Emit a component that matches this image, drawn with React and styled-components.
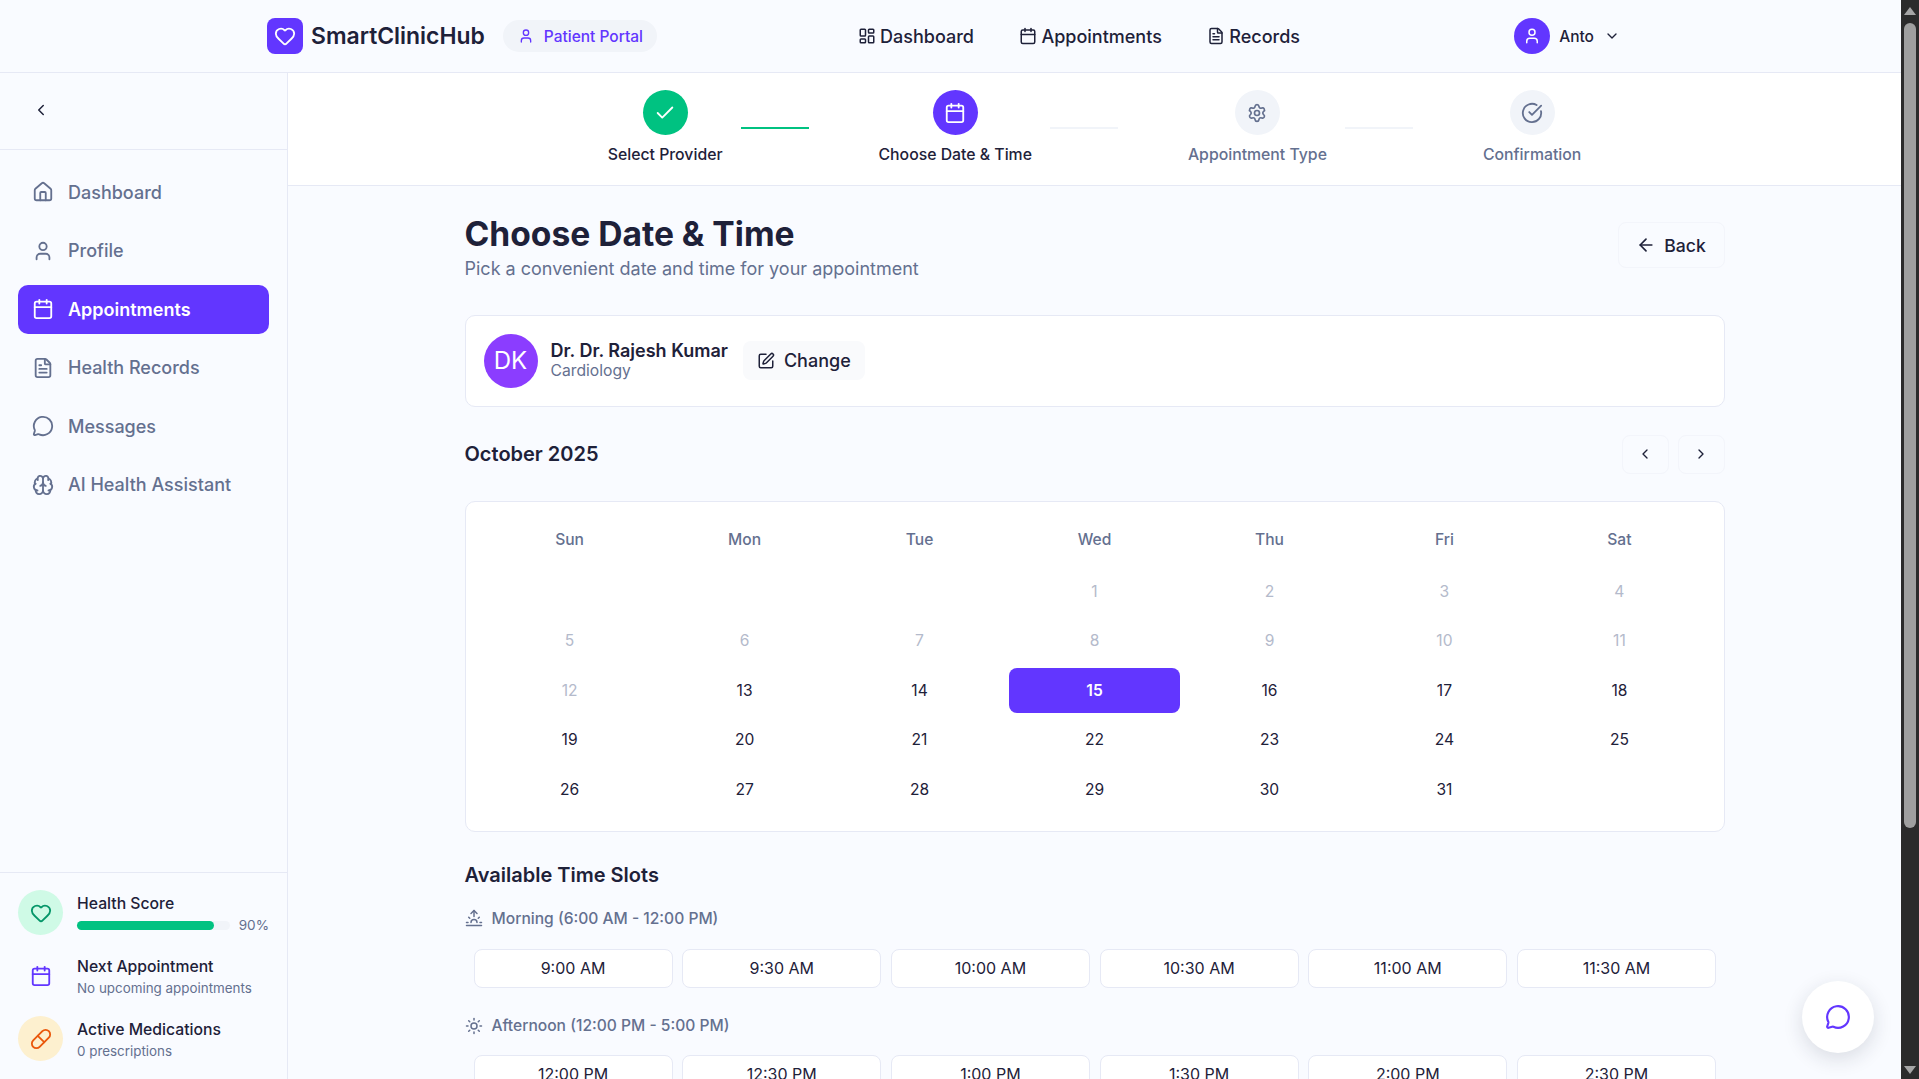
import React from "react";
import styled, { createGlobalStyle } from "styled-components";
import {
  ArrowLeft,
  Brain,
  Calendar,
  Check,
  CircleCheckBig,
  ChevronDown,
  ChevronLeft,
  ChevronRight,
  FileText,
  Heart,
  House,
  LayoutDashboard,
  MessageCircle,
  Pill,
  Settings,
  SquarePen,
  Sun,
  Sunrise,
  User,
} from "lucide-react";

const primary = "#6236ff";
const ink = "#1e2139";
const muted = "#64708f";
const line = "#e6e9f5";
const page = "#f9fbff";

const GlobalStyle = createGlobalStyle`
  html, body { margin: 0; height: 100%; overflow: hidden; }
  body { font-family: Inter, "Noto Sans", sans-serif; background: ${page}; color: ${ink}; }
  * { box-sizing: border-box; }
`;

const sideNav = [
  { label: "Dashboard", icon: House },
  { label: "Profile", icon: User },
  { label: "Appointments", icon: Calendar, active: true },
  { label: "Health Records", icon: FileText },
  { label: "Messages", icon: MessageCircle },
  { label: "AI Health Assistant", icon: Brain },
];

const topNav = [
  { label: "Dashboard", icon: LayoutDashboard },
  { label: "Appointments", icon: Calendar },
  { label: "Records", icon: FileText },
];

const steps = [
  { label: "Select Provider", icon: Check, state: "done" },
  { label: "Choose Date & Time", icon: Calendar, state: "active" },
  { label: "Appointment Type", icon: Settings, state: "todo" },
  { label: "Confirmation", icon: CircleCheckBig, state: "todo" },
];

const weekDays = ["Sun", "Mon", "Tue", "Wed", "Thu", "Fri", "Sat"];
const morning = ["9:00 AM", "9:30 AM", "10:00 AM", "10:30 AM", "11:00 AM", "11:30 AM"];
const afternoon = ["12:00 PM", "12:30 PM", "1:00 PM", "1:30 PM", "2:00 PM", "2:30 PM"];

export default function App() {
  const blanks = Array.from({ length: 3 });
  const days = Array.from({ length: 31 }, (_, i) => i + 1);

  return (
    <Frame>
      <GlobalStyle />
      <Viewport>
        <Header>
          <HeaderInner>
            <Brand>
              <LogoBox>
                <Heart size={22} strokeWidth={2} />
              </LogoBox>
              <BrandName>SmartClinicHub</BrandName>
              <PortalPill>
                <User size={16} />
                Patient Portal
              </PortalPill>
            </Brand>
            <TopNav>
              {topNav.map(({ label, icon: Icon }) => (
                <TopLink key={label}>
                  <Icon size={18} />
                  {label}
                </TopLink>
              ))}
            </TopNav>
            <UserMenu>
              <UserAvatar>
                <User size={18} />
              </UserAvatar>
              <UserName>Anto</UserName>
              <ChevronDown size={16} />
            </UserMenu>
          </HeaderInner>
        </Header>

        <Body>
          <Sidebar>
            <CollapseRow>
              <ChevronLeft size={18} />
            </CollapseRow>
            <SideNav>
              {sideNav.map(({ label, icon: Icon, active }) => (
                <SideLink key={label} $active={active}>
                  <Icon size={22} />
                  {label}
                </SideLink>
              ))}
            </SideNav>
            <SideStats>
              <StatRow>
                <StatIcon $bg="#cffae6" $color="#059669">
                  <Heart size={22} />
                </StatIcon>
                <StatText>
                  <StatTitle>Health Score</StatTitle>
                  <ScoreLine>
                    <ScoreTrack>
                      <ScoreFill style={{ width: "90%" }} />
                    </ScoreTrack>
                    <ScoreValue>90%</ScoreValue>
                  </ScoreLine>
                </StatText>
              </StatRow>
              <StatRow>
                <StatIcon $color={primary}>
                  <Calendar size={22} />
                </StatIcon>
                <StatText>
                  <StatTitle>Next Appointment</StatTitle>
                  <StatSub>No upcoming appointments</StatSub>
                </StatText>
              </StatRow>
              <StatRow>
                <StatIcon $bg="#fdf0cf" $color="#ea580c">
                  <Pill size={22} />
                </StatIcon>
                <StatText>
                  <StatTitle>Active Medications</StatTitle>
                  <StatSub>0 prescriptions</StatSub>
                </StatText>
              </StatRow>
            </SideStats>
          </Sidebar>

          <Main>
            <Stepper>
              {steps.map(({ label, icon: Icon, state }, i) => (
                <React.Fragment key={label}>
                  <Step>
                    <StepCircle $state={state}>
                      <Icon size={state === "todo" ? (i === 3 ? 22 : 20) : 22} />
                    </StepCircle>
                    <StepLabel $state={state}>{label}</StepLabel>
                  </Step>
                  {i < steps.length - 1 && <Connector $done={state === "done"} />}
                </React.Fragment>
              ))}
            </Stepper>

            <Content>
              <TitleRow>
                <div>
                  <PageTitle>Choose Date &amp; Time</PageTitle>
                  <PageSub>Pick a convenient date and time for your appointment</PageSub>
                </div>
                <BackButton>
                  <ArrowLeft size={20} />
                  Back
                </BackButton>
              </TitleRow>

              <DoctorCard>
                <DoctorAvatar>DK</DoctorAvatar>
                <div>
                  <DoctorName>Dr. Dr. Rajesh Kumar</DoctorName>
                  <DoctorSpec>Cardiology</DoctorSpec>
                </div>
                <ChangeButton>
                  <SquarePen size={18} />
                  Change
                </ChangeButton>
              </DoctorCard>

              <MonthRow>
                <MonthTitle>October 2025</MonthTitle>
                <MonthNav>
                  <MonthButton>
                    <ChevronLeft size={16} />
                  </MonthButton>
                  <MonthButton>
                    <ChevronRight size={16} />
                  </MonthButton>
                </MonthNav>
              </MonthRow>

              <CalendarCard>
                <WeekHead>
                  {weekDays.map((d) => (
                    <WeekDay key={d}>{d}</WeekDay>
                  ))}
                </WeekHead>
                <DayGrid>
                  {blanks.map((_, i) => (
                    <Day key={`b${i}`} />
                  ))}
                  {days.map((d) => (
                    <Day key={d} $off={d < 13} $selected={d === 15}>
                      {d}
                    </Day>
                  ))}
                </DayGrid>
              </CalendarCard>

              <SlotsTitle>Available Time Slots</SlotsTitle>
              <PeriodLabel>
                <Sunrise size={18} />
                Morning (6:00 AM - 12:00 PM)
              </PeriodLabel>
              <SlotGrid>
                {morning.map((t) => (
                  <Slot key={t}>{t}</Slot>
                ))}
              </SlotGrid>
              <PeriodLabel>
                <Sun size={18} />
                Afternoon (12:00 PM - 5:00 PM)
              </PeriodLabel>
              <SlotGrid $tight>
                {afternoon.map((t) => (
                  <Slot key={t}>{t}</Slot>
                ))}
              </SlotGrid>
            </Content>
          </Main>
        </Body>

        <ChatFab>
          <MessageCircle size={26} />
        </ChatFab>
      </Viewport>

      <ScrollBar>
        <ArrowUp />
        <Thumb />
        <ArrowDown />
      </ScrollBar>
    </Frame>
  );
}

const Frame = styled.div`
  display: flex;
  width: 100vw;
  height: 100vh;
  overflow: hidden;
`;

const Viewport = styled.div`
  position: relative;
  flex: 1;
  min-width: 0;
  display: flex;
  flex-direction: column;
  overflow: hidden;
`;

const Header = styled.header`
  flex: none;
  height: 73px;
  background: ${page};
  border-bottom: 1px solid ${line};
  box-shadow: 0 1px 3px rgba(30, 33, 57, 0.04);
`;

const HeaderInner = styled.div`
  display: flex;
  align-items: center;
  height: 100%;
  margin-left: 267px;
  width: 1367px;
`;

const Brand = styled.div`
  display: flex;
  align-items: center;
`;

const LogoBox = styled.div`
  display: flex;
  align-items: center;
  justify-content: center;
  width: 36px;
  height: 36px;
  border-radius: 8px;
  color: #fff;
  background: ${primary};
`;

const BrandName = styled.span`
  margin-left: 8px;
  font-size: 22.9px;
  font-weight: 600;
  color: ${ink};
`;

const PortalPill = styled.span`
  display: flex;
  align-items: center;
  gap: 10px;
  height: 32px;
  margin-left: 18px;
  padding: 0 14px 0 15px;
  border-radius: 16px;
  font-size: 15.5px;
  font-weight: 500;
  color: ${primary};
  background: #f1f4f9;
`;

const TopNav = styled.nav`
  display: flex;
  align-items: center;
  gap: 45.5px;
  margin-left: 201px;
`;

const TopLink = styled.a`
  display: flex;
  align-items: center;
  gap: 4px;
  font-size: 18px;
  font-weight: 500;
  color: ${ink};
  svg { color: ${ink}; }
`;

const UserMenu = styled.div`
  display: flex;
  align-items: center;
  margin-left: auto;
  padding-right: 14px;
  color: ${ink};
`;

const UserAvatar = styled.div`
  display: flex;
  align-items: center;
  justify-content: center;
  width: 36px;
  height: 36px;
  border-radius: 50%;
  color: #fff;
  background: ${primary};
`;

const UserName = styled.span`
  margin: 0 10px 0 9px;
  font-size: 15.5px;
  font-weight: 500;
`;

const Body = styled.div`
  flex: 1;
  min-height: 0;
  display: flex;
`;

const Sidebar = styled.aside`
  flex: none;
  width: 288px;
  display: flex;
  flex-direction: column;
  background: ${page};
  border-right: 1px solid ${line};
`;

const CollapseRow = styled.div`
  display: flex;
  align-items: center;
  height: 77px;
  padding: 0 0 2px 32px;
  color: ${ink};
  border-bottom: 1px solid ${line};
`;

const SideNav = styled.nav`
  display: flex;
  flex-direction: column;
  gap: 10px;
  padding: 18px 18px 0;
`;

const SideLink = styled.a`
  display: flex;
  align-items: center;
  gap: 14px;
  height: 48.5px;
  padding-left: 14px;
  border-radius: 10px;
  font-size: 18px;
  font-weight: ${(p) => (p.$active ? 600 : 500)};
  color: ${(p) => (p.$active ? "#fff" : muted)};
  background: ${(p) => (p.$active ? primary : "transparent")};
`;

const SideStats = styled.div`
  margin-top: auto;
  display: flex;
  flex-direction: column;
  gap: 18px;
  padding: 17px 18px 18px;
  border-top: 1px solid ${line};
`;

const StatRow = styled.div`
  display: flex;
  align-items: center;
  gap: 14px;
`;

const StatIcon = styled.div`
  flex: none;
  display: flex;
  align-items: center;
  justify-content: center;
  width: 45px;
  height: 45px;
  border-radius: 50%;
  color: ${(p) => p.$color};
  background: ${(p) => p.$bg || "transparent"};
`;

const StatText = styled.div`
  flex: 1;
  min-width: 0;
  padding-top: 3px;
`;

const StatTitle = styled.div`
  font-size: 15.75px;
  line-height: 22px;
  font-weight: 500;
  color: ${ink};
`;

const StatSub = styled.div`
  font-size: 13.4px;
  line-height: 20px;
  color: ${muted};
`;

const ScoreLine = styled.div`
  display: flex;
  align-items: center;
  gap: 9px;
  height: 20px;
`;

const ScoreTrack = styled.div`
  flex: 1;
  height: 9px;
  border-radius: 5px;
  background: #f1f4f9;
`;

const ScoreFill = styled.div`
  height: 100%;
  border-radius: 5px;
  background: #00c281;
`;

const ScoreValue = styled.span`
  font-size: 13.6px;
  color: ${muted};
`;

const Main = styled.main`
  flex: 1;
  min-width: 0;
  overflow: hidden;
`;

const Stepper = styled.div`
  display: flex;
  align-items: center;
  justify-content: center;
  height: 113px;
  padding-bottom: 2px;
  background: #fff;
  border-bottom: 1px solid ${line};
`;

const Step = styled.div`
  display: flex;
  flex-direction: column;
  align-items: center;
  gap: 9px;
`;

const stepColors = {
  done: ["#00c281", "#fff"],
  active: [primary, "#fff"],
  todo: ["#f1f4f9", muted],
};

const StepCircle = styled.div`
  display: flex;
  align-items: center;
  justify-content: center;
  width: 45px;
  height: 45px;
  border-radius: 50%;
  background: ${(p) => stepColors[p.$state][0]};
  color: ${(p) => stepColors[p.$state][1]};
`;

const StepLabel = styled.div`
  font-size: 15.8px;
  font-weight: 500;
  line-height: 22px;
  white-space: nowrap;
  color: ${(p) => (p.$state === "todo" ? muted : ink)};
`;

const Connector = styled.div`
  width: 68px;
  height: 2.5px;
  margin: 0 70px 0 18px;
  background: ${(p) => (p.$done ? "#00c281" : "#f1f4f9")};
`;

const Content = styled.div`
  width: 1260px;
  margin: 0 auto;
  padding-top: 27px;
`;

const TitleRow = styled.div`
  display: flex;
  align-items: flex-start;
  justify-content: space-between;
`;

const PageTitle = styled.h1`
  margin: 0;
  font-size: 33.6px;
  line-height: 41px;
  font-weight: 700;
  color: ${ink};
`;

const PageSub = styled.p`
  margin: 3px 0 0;
  font-size: 18px;
  line-height: 24px;
  color: ${muted};
`;

const BackButton = styled.button`
  display: flex;
  align-items: center;
  justify-content: center;
  gap: 8px;
  width: 107px;
  height: 46px;
  margin-top: 9px;
  padding: 0;
  font: 500 17.6px Inter, sans-serif;
  color: ${ink};
  background: ${page};
  border: 1.5px solid #f3f5fb;
  border-radius: 8px;
`;

const DoctorCard = styled.div`
  display: flex;
  align-items: center;
  gap: 13px;
  height: 92px;
  margin-top: 34px;
  padding: 0 18px 1px;
  background: #fff;
  border: 1.5px solid ${line};
  border-radius: 10px;
`;

const DoctorAvatar = styled.div`
  flex: none;
  display: flex;
  align-items: center;
  justify-content: center;
  width: 54px;
  height: 54px;
  border-radius: 50%;
  font-size: 24px;
  color: #fff;
  background: #8b3dff;
`;

const DoctorName = styled.div`
  font-size: 18px;
  line-height: 21px;
  font-weight: 600;
  color: ${ink};
`;

const DoctorSpec = styled.div`
  font-size: 15.7px;
  line-height: 20px;
  color: ${muted};
`;

const ChangeButton = styled.button`
  display: flex;
  align-items: center;
  gap: 9px;
  height: 39px;
  margin-left: 2px;
  padding: 0 14px;
  font: 500 18px Inter, sans-serif;
  color: ${ink};
  background: #f9fafc;
  border: none;
  border-radius: 8px;
`;

const MonthRow = styled.div`
  display: flex;
  align-items: center;
  justify-content: space-between;
  height: 39px;
  margin-top: 27.5px;
`;

const MonthTitle = styled.h2`
  margin: 0;
  font-size: 20px;
  font-weight: 600;
  color: ${ink};
`;

const MonthNav = styled.div`
  display: flex;
  gap: 9px;
`;

const MonthButton = styled.button`
  display: flex;
  align-items: center;
  justify-content: center;
  width: 47px;
  height: 39px;
  padding: 0;
  color: ${ink};
  background: ${page};
  border: 1.5px solid #f3f5fb;
  border-radius: 8px;
`;

const CalendarCard = styled.div`
  height: 331px;
  margin-top: 27px;
  padding: 21px 19px 19px;
  background: #fff;
  border: 1.5px solid ${line};
  border-radius: 10px;
`;

const WeekHead = styled.div`
  display: grid;
  grid-template-columns: repeat(7, 1fr);
  gap: 4.8px;
  margin-bottom: 12px;
`;

const WeekDay = styled.div`
  height: 34px;
  display: flex;
  align-items: center;
  justify-content: center;
  font-size: 15.6px;
  font-weight: 500;
  color: ${muted};
`;

const DayGrid = styled.div`
  display: grid;
  grid-template-columns: repeat(7, 1fr);
  grid-auto-rows: 45px;
  column-gap: 4.8px;
  row-gap: 4.6px;
`;

const Day = styled.div`
  display: flex;
  align-items: center;
  justify-content: center;
  border-radius: 8px;
  font-size: 15.6px;
  font-weight: ${(p) => (p.$selected ? 600 : 400)};
  color: ${(p) => (p.$selected ? "#fff" : p.$off ? "#b4bacb" : ink)};
  background: ${(p) => (p.$selected ? primary : "transparent")};
`;

const SlotsTitle = styled.h3`
  margin: 30px 0 0;
  font-size: 20px;
  line-height: 26px;
  font-weight: 600;
  color: ${ink};
`;

const PeriodLabel = styled.div`
  display: flex;
  align-items: center;
  gap: 9px;
  height: 24px;
  margin-top: 18.5px;
  font-size: 15.6px;
  font-weight: 500;
  color: ${muted};
`;

const SlotGrid = styled.div`
  display: grid;
  grid-template-columns: repeat(6, 1fr);
  gap: 9.6px;
  margin-top: ${(p) => (p.$tight ? "17px" : "19px")};
  padding: 0 8.5px 7.5px 9px;
`;

const Slot = styled.button`
  height: 38.5px;
  padding: 0;
  font: 400 16px Inter, sans-serif;
  color: ${ink};
  background: #fff;
  border: 1.5px solid ${line};
  border-radius: 8px;
`;

const ChatFab = styled.div`
  position: absolute;
  right: 27px;
  bottom: 26px;
  display: flex;
  align-items: center;
  justify-content: center;
  width: 72px;
  height: 72px;
  border-radius: 50%;
  color: ${primary};
  background: #fff;
  box-shadow: 0 6px 20px rgba(30, 33, 57, 0.14);
`;

const ScrollBar = styled.div`
  flex: none;
  width: 18px;
  display: flex;
  flex-direction: column;
  align-items: center;
  padding: 7px 0 5px;
  background: #2b2b2b;
`;

const ArrowUp = styled.div`
  width: 0;
  height: 0;
  border-left: 6px solid transparent;
  border-right: 6px solid transparent;
  border-bottom: 8px solid #a6a6a6;
`;

const ArrowDown = styled.div`
  width: 0;
  height: 0;
  margin-top: auto;
  border-left: 6px solid transparent;
  border-right: 6px solid transparent;
  border-top: 8px solid #a6a6a6;
`;

const Thumb = styled.div`
  width: 12px;
  height: 805px;
  margin-top: 8px;
  border-radius: 6px;
  background: #9f9f9f;
`;
